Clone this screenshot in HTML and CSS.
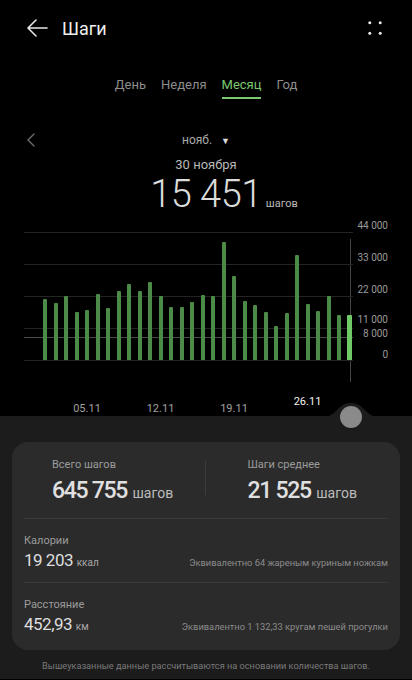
FILE: index.html
```html
<!DOCTYPE html>
<html lang="ru">
<head>
  <meta charset="UTF-8" />
  <meta name="viewport" content="width=device-width, initial-scale=1.0" />
  <title>Шаги</title>
  <link rel="stylesheet" href="styles.css">
</head>
<body>
  <header class="topbar">
    <svg class="back" width="22" height="18" viewBox="0 0 22 18">
      <path d="M21 9H2M10 1L2 9l8 8" fill="none" stroke="#e8e8e8" stroke-width="1.6" stroke-linecap="round" stroke-linejoin="round"/>
    </svg>
    <h1>Шаги</h1>
    <svg class="more" width="14" height="14" viewBox="0 0 14 14">
      <circle cx="1.8" cy="1.8" r="1.5" fill="#e8e8e8"/>
      <circle cx="12.2" cy="1.8" r="1.5" fill="#e8e8e8"/>
      <circle cx="1.8" cy="12.2" r="1.5" fill="#e8e8e8"/>
      <circle cx="12.2" cy="12.2" r="1.5" fill="#e8e8e8"/>
    </svg>
  </header>

  <nav class="tabs">
    <span class="tab">День</span>
    <span class="tab">Неделя</span>
    <span class="tab active">Месяц</span>
    <span class="tab">Год</span>
  </nav>

  <div class="month">
    <svg class="prev" width="8" height="14" viewBox="0 0 8 14">
      <path d="M7 1L1 7l6 6" fill="none" stroke="#6e6e6e" stroke-width="1.4" stroke-linecap="round" stroke-linejoin="round"/>
    </svg>
    <span class="month-name">нояб. <span class="caret">▼</span></span>
  </div>

  <div class="day-date">30 ноября</div>
  <div class="day-total"><span class="big">15 451</span> <span class="unit">шагов</span></div>

  <section class="chart">
    <div class="plot">
      <div class="goal"></div>
      <div class="yaxis">
        <span style="top:-11px">44 000</span>
        <span style="top:21px">33 000</span>
        <span style="top:53px">22 000</span>
        <span style="top:83px">11 000</span>
        <span style="top:97px">8 000</span>
        <span style="top:118px">0</span>
      </div>
      <div class="bars">
        <div class="day"><div class="slot"><div class="bar" style="height:61px"></div></div></div>
        <div class="day"><div class="slot"><div class="bar" style="height:57px"></div></div></div>
        <div class="day"><div class="slot"><div class="bar" style="height:64px"></div></div></div>
        <div class="day"><div class="slot"><div class="bar" style="height:48px"></div></div></div>
        <div class="day"><div class="slot"><div class="bar" style="height:50px"></div></div><span class="tick">05.11</span></div>
        <div class="day"><div class="slot"><div class="bar" style="height:66px"></div></div></div>
        <div class="day"><div class="slot"><div class="bar" style="height:52px"></div></div></div>
        <div class="day"><div class="slot"><div class="bar" style="height:69px"></div></div></div>
        <div class="day"><div class="slot"><div class="bar" style="height:76px"></div></div></div>
        <div class="day"><div class="slot"><div class="bar" style="height:69px"></div></div></div>
        <div class="day"><div class="slot"><div class="bar" style="height:78px"></div></div></div>
        <div class="day"><div class="slot"><div class="bar" style="height:64px"></div></div><span class="tick">12.11</span></div>
        <div class="day"><div class="slot"><div class="bar" style="height:53px"></div></div></div>
        <div class="day"><div class="slot"><div class="bar" style="height:53px"></div></div></div>
        <div class="day"><div class="slot"><div class="bar" style="height:58px"></div></div></div>
        <div class="day"><div class="slot"><div class="bar" style="height:65px"></div></div></div>
        <div class="day"><div class="slot"><div class="bar" style="height:64px"></div></div></div>
        <div class="day"><div class="slot"><div class="bar" style="height:118px"></div></div></div>
        <div class="day"><div class="slot"><div class="bar" style="height:84px"></div></div><span class="tick">19.11</span></div>
        <div class="day"><div class="slot"><div class="bar" style="height:59px"></div></div></div>
        <div class="day"><div class="slot"><div class="bar" style="height:55px"></div></div></div>
        <div class="day"><div class="slot"><div class="bar" style="height:48px"></div></div></div>
        <div class="day"><div class="slot"><div class="bar" style="height:34px"></div></div></div>
        <div class="day"><div class="slot"><div class="bar" style="height:47px"></div></div></div>
        <div class="day"><div class="slot"><div class="bar" style="height:105px"></div></div></div>
        <div class="day"><div class="slot"><div class="bar" style="height:56px"></div></div><span class="tick hi">26.11</span></div>
        <div class="day"><div class="slot"><div class="bar" style="height:49px"></div></div></div>
        <div class="day"><div class="slot"><div class="bar" style="height:64px"></div></div></div>
        <div class="day"><div class="slot"><div class="bar" style="height:45px"></div></div></div>
        <div class="day sel"><div class="slot"><div class="bar" style="height:45px"></div></div></div>
      </div>
    </div>
  </section>

  <main class="panel">
    <svg class="bump" width="56" height="14" viewBox="0 0 56 14">
      <path d="M0 14C14 14 14 0 28 0S42 14 56 14Z" fill="#1c1c1c"/>
    </svg>
    <div class="knob"></div>

    <div class="card">
      <div class="totals">
        <div class="stat">
          <div class="label">Всего шагов</div>
          <div class="value"><b>645 755</b> шагов</div>
        </div>
        <div class="stat split">
          <div class="label">Шаги среднее</div>
          <div class="value"><b>21 525</b> шагов</div>
        </div>
      </div>
      <div class="row">
        <div class="label">Калории</div>
        <div class="line">
          <span class="num">19 203 <small>ккал</small></span>
          <span class="note">Эквивалентно 64 жареным куриным ножкам</span>
        </div>
      </div>
      <div class="row last">
        <div class="label">Расстояние</div>
        <div class="line">
          <span class="num">452,93 <small>км</small></span>
          <span class="note">Эквивалентно 1 132,33 кругам пешей прогулки</span>
        </div>
      </div>
    </div>

    <p class="footnote">Вышеуказанные данные рассчитываются на основании количества шагов.</p>
  </main>
</body>
</html>
```

FILE: styles.css
```css
body {
  margin: 0;
  background: #000;
  color: #e6e6e6;
  font-family: Roboto, "Noto Sans", sans-serif;
  width: 412px;
  height: 680px;
  overflow: hidden;
}
.topbar {
  height: 56px;
  display: flex;
  align-items: center;
  padding: 0 30px 0 26px;
}
.topbar h1 {
  margin: 0 0 0 14px;
  font-size: 18px;
  font-weight: 400;
  color: #eee;
}
.more {
  margin-left: auto;
}
.tabs {
  display: flex;
  justify-content: center;
  gap: 15px;
  margin-top: 14px;
}
.tab {
  font-size: 13px;
  line-height: 20px;
  padding: 5px 0 2px;
  color: #8e8e8e;
  border-bottom: 2px solid transparent;
}
.tab.active {
  color: #7cc872;
  border-bottom-color: #7cc872;
}
.month {
  display: grid;
  grid-template-columns: 1fr auto 1fr;
  align-items: center;
  height: 20px;
  margin-top: 31px;
}
.prev {
  margin-left: 27px;
}
.month-name {
  font-size: 12px;
  color: #a8a8a8;
}
.caret {
  font-size: 9px;
  margin-left: 6px;
  color: #ddd;
}
.day-date {
  text-align: center;
  font-size: 13px;
  line-height: 18px;
  margin-top: 6px;
  color: #b8b8b8;
}
.day-total {
  text-align: center;
  line-height: 40px;
  height: 40px;
  padding-left: 36px;
}
.big {
  font-size: 38px;
  font-weight: 300;
  color: #dcdcdc;
  letter-spacing: -0.5px;
}
.unit {
  font-size: 11px;
  color: #bbb;
}
.chart {
  height: 202px;
  padding-top: 18px;
  box-sizing: border-box;
}
.plot {
  position: relative;
  margin-left: 24px;
  width: 329px;
  height: 129px;
  background: repeating-linear-gradient(to bottom, #242424 0 1px, transparent 1px 32px);
}
.goal {
  position: absolute;
  left: 0;
  right: 0;
  bottom: 23px;
  height: 1px;
  background: #4a4a4a;
}
.yaxis span {
  position: absolute;
  right: -35px;
  font-size: 10px;
  line-height: 9px;
  color: #9a9a9a;
  white-space: nowrap;
}
.bars {
  position: relative;
  display: flex;
  gap: 6.5px;
  padding-left: 19px;
}
.day {
  width: 4px;
  display: flex;
  flex-direction: column;
  align-items: center;
}
.slot {
  height: 128px;
  width: 4px;
  display: flex;
  align-items: flex-end;
}
.bar {
  width: 4px;
  background: #4c8b47;
  border-radius: 1px 1px 0 0;
}
.day.sel {
  position: relative;
}
.day.sel .slot,
.day.sel .bar {
  width: 5px;
}
.day.sel .bar {
  background: #6fc966;
}
.day.sel::before {
  content: "";
  position: absolute;
  left: 2px;
  top: 7px;
  width: 1px;
  height: 143px;
  background: #444;
  z-index: -1;
}
.tick {
  margin-top: 42px;
  font-size: 11px;
  line-height: 14px;
  color: #a0a0a0;
  white-space: nowrap;
}
.tick.hi {
  margin-top: 35px;
  color: #f2f2f2;
}
.panel {
  position: relative;
  background: #1c1c1c;
  padding: 26px 12px 0;
  height: 263px;
  box-sizing: border-box;
}
.bump {
  position: absolute;
  left: 323px;
  top: -13px;
}
.knob {
  position: absolute;
  left: 340px;
  top: -10px;
  width: 22px;
  height: 22px;
  border-radius: 50%;
  background: #8a8a8a;
}
.card {
  background: #2b2b2b;
  border-radius: 16px;
  height: 208px;
}
.totals {
  display: flex;
  height: 76px;
}
.stat {
  flex: 1;
  padding: 16px 0 0 40px;
  position: relative;
}
.stat.split {
  padding-left: 43px;
}
.stat.split::before {
  content: "";
  position: absolute;
  left: 0;
  top: 19px;
  width: 1px;
  height: 34px;
  background: #3c3c3c;
}
.label {
  font-size: 11px;
  line-height: 14px;
  color: #9c9c9c;
}
.value {
  margin-top: 5px;
  line-height: 28px;
  font-size: 14px;
  color: #bdbdbd;
}
.value b {
  font-size: 23px;
  font-weight: 500;
  letter-spacing: -1.3px;
  margin-right: 2px;
  color: #e0e0e0;
}
.row {
  margin: 0 12px;
  border-top: 1px solid #393939;
  height: 64px;
  box-sizing: border-box;
  padding-top: 15px;
}
.row.last {
  height: 68px;
}
.line {
  display: flex;
  justify-content: space-between;
  align-items: baseline;
  line-height: 22px;
  margin-top: 1px;
}
.num {
  font-size: 17px;
  letter-spacing: -0.5px;
  color: #dedede;
}
.num small {
  font-size: 10px;
  letter-spacing: 0;
  color: #a8a8a8;
}
.note {
  font-size: 9.3px;
  color: #8c8c8c;
}
.footnote {
  margin: 9px 0 0;
  text-align: center;
  font-size: 9.2px;
  line-height: 14px;
  color: #7a7a7a;
}
```
